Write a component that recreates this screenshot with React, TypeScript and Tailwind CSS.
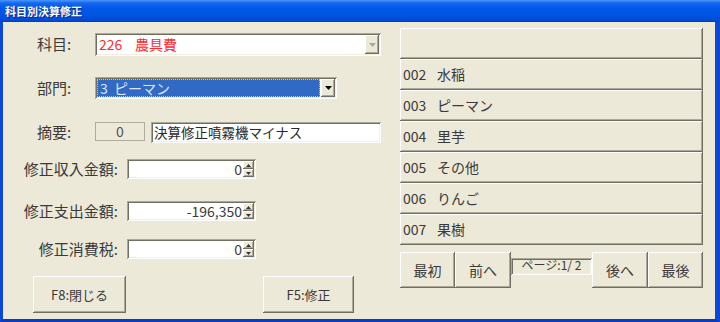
const font = { fontFamily: '"Noto Sans CJK JP", "Noto Sans", sans-serif' }

const raised =
  'bg-[#ece9d8] shadow-[inset_-1px_-1px_0_#716f64,inset_1px_1px_0_#ffffff,inset_-2px_-2px_0_#aca899]'
const sunken =
  'shadow-[inset_1px_1px_0_#aca899,inset_-1px_-1px_0_#ffffff,inset_2px_2px_0_#716f64,inset_-2px_-2px_0_#f1efe2]'

const items = [
  { code: '', name: '' },
  { code: '002', name: '水稲' },
  { code: '003', name: 'ピーマン' },
  { code: '004', name: '里芋' },
  { code: '005', name: 'その他' },
  { code: '006', name: 'りんご' },
  { code: '007', name: '果樹' },
]

function Arrow({ color }: { color: string }) {
  return (
    <svg width="7" height="4" viewBox="0 0 7 4">
      <path d="M0 0h7L3.5 4z" fill={color} />
    </svg>
  )
}

function SpinBox({ value }: { value: string }) {
  return (
    <div className={`w-[129px] h-[20px] bg-white flex items-center pl-[2px] pr-[2px] ${sunken}`}>
      <span className="flex-1 text-right text-[14px] leading-none text-[#3a3a3a] pr-[1px]">
        {value}
      </span>
      <div className="w-[11px] h-[16px] flex flex-col">
        <div className={`h-[8px] flex items-center justify-center ${raised}`}>
          <svg width="5" height="3" viewBox="0 0 5 3">
            <path d="M2.5 0L5 3H0z" fill="#333" />
          </svg>
        </div>
        <div className={`h-[8px] flex items-center justify-center ${raised}`}>
          <svg width="5" height="3" viewBox="0 0 5 3">
            <path d="M0 0h5L2.5 3z" fill="#333" />
          </svg>
        </div>
      </div>
    </div>
  )
}

function PagerButton({ label, width }: { label: string; width: string }) {
  return (
    <div className={`${width} h-[36px] flex items-center justify-center text-[14px] text-[#3a3a3a] ${raised}`}>
      {label}
    </div>
  )
}

export default function App() {
  return (
    <div className="w-[720px] h-[322px] flex flex-col bg-[#ece9d8] select-none" style={font}>
      <div className="h-[22px] flex items-center pl-[5px] bg-[linear-gradient(to_bottom,#4a97fb_0%,#1466ee_14%,#0058e8_40%,#0054e2_70%,#004ad6_90%,#003fc0_100%)]">
        <span className="text-[11px] font-bold text-white leading-none [text-shadow:1px_1px_0_#0a2a8a]">
          科目別決算修正
        </span>
      </div>

      <div className="flex-1 flex border-l-[3px] border-r-[5px] border-b-[3px] border-[#0b48d6] border-b-[#083cc4]">
        {/* left form */}
        <div className="w-[397px] flex flex-col text-[#3a3a3a]">
          <div className="mt-[11px] h-[23px] flex items-center">
            <div className="w-[92px] pl-[34px] text-[15px]">科目:</div>
            <div className={`w-[286px] h-[23px] bg-white flex items-center pl-[4px] pr-[2px] ${sunken}`}>
              <span className="text-[14px] text-[#ff2a2a] w-[36px]">226</span>
              <span className="flex-1 text-[14px] text-[#ff2a2a]">農具費</span>
              <div className={`w-[14px] h-[19px] flex items-center justify-center ${raised}`}>
                <Arrow color="#a8a8a8" />
              </div>
            </div>
          </div>

          <div className="mt-[21px] h-[22px] flex items-center">
            <div className="w-[92px] pl-[34px] text-[15px]">部門:</div>
            <div className={`w-[242px] h-[22px] bg-white flex items-center p-[2px] ${sunken}`}>
              <div className="flex-1 h-full bg-[#316ac5] border border-dotted border-[#c8c8c8] flex items-center pl-[2px] text-[14px] text-[#dde6f5]">
                <span className="w-[14px]">3</span>
                <span>ピーマン</span>
              </div>
              <div className={`w-[14px] h-[18px] ml-[1px] flex items-center justify-center ${raised}`}>
                <Arrow color="#000" />
              </div>
            </div>
          </div>

          <div className="mt-[23px] h-[21px] flex items-center">
            <div className="w-[92px] pl-[34px] text-[15px]">摘要:</div>
            <div className="w-[50px] h-[19px] self-start border border-[#b0ad9e] flex items-center justify-center text-[14px] text-[#555]">
              0
            </div>
            <div className={`ml-[6px] w-[230px] h-[21px] bg-white flex items-center pl-[3px] text-[13.5px] text-[#2a2a2a] ${sunken}`}>
              決算修正噴霧機マイナス
            </div>
          </div>

          <div className="mt-[16px] h-[20px] flex items-center">
            <div className="w-[124px] pr-[9px] text-right text-[15px]">修正収入金額:</div>
            <SpinBox value="0" />
          </div>

          <div className="mt-[22px] h-[20px] flex items-center">
            <div className="w-[124px] pr-[9px] text-right text-[15px]">修正支出金額:</div>
            <SpinBox value="-196,350" />
          </div>

          <div className="mt-[18px] h-[20px] flex items-center">
            <div className="w-[124px] pr-[9px] text-right text-[15px]">修正消費税:</div>
            <SpinBox value="0" />
          </div>

          <div className="mt-[17px] flex">
            <div className={`ml-[30px] w-[93px] h-[37px] flex items-center justify-center text-[13px] ${raised}`}>
              F8:閉じる
            </div>
            <div className={`ml-[137px] w-[91px] h-[37px] flex items-center justify-center text-[13px] ${raised}`}>
              F5:修正
            </div>
          </div>
        </div>

        {/* right list */}
        <div className="w-[303px] mt-[6px] flex flex-col">
          {items.map((item, i) => (
            <div key={i} className={`h-[31px] flex items-center pl-[3px] text-[14px] text-[#3a3a3a] ${raised}`}>
              <span className="w-[34px]">{item.code}</span>
              <span>{item.name}</span>
            </div>
          ))}

          <div className="mt-[7px] flex">
            <PagerButton label="最初" width="w-[55px]" />
            <PagerButton label="前へ" width="w-[56px]" />
            <div className="w-[81px] h-[36px] flex">
              <div className={`mt-[6px] w-full h-[17px] flex items-start justify-center text-[12px] leading-[14px] text-[#3a3a3a] ${sunken}`}>
                ページ:1/ 2
              </div>
            </div>
            <PagerButton label="後へ" width="w-[56px]" />
            <PagerButton label="最後" width="w-[55px]" />
          </div>
        </div>
      </div>
    </div>
  )
}
